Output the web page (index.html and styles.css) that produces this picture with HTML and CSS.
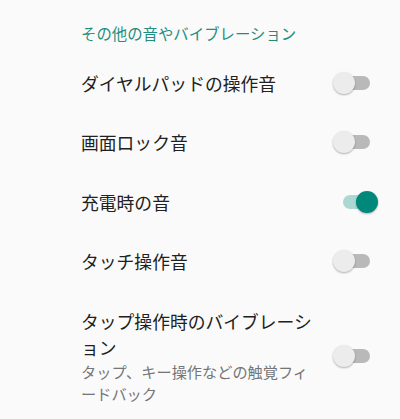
FILE: index.html
```html
<!DOCTYPE html>
<html lang="ja">
<head>
<meta charset="utf-8">
<link rel="stylesheet" href="styles.css">
</head>
<body>
<div class="screen">
  <div class="category">その他の音やバイブレーション</div>
  <div class="row">
    <div class="text"><div class="title">ダイヤルパッドの操作音</div></div>
    <div class="switch"><span class="track"></span><span class="thumb"></span></div>
  </div>
  <div class="row">
    <div class="text"><div class="title">画面ロック音</div></div>
    <div class="switch"><span class="track"></span><span class="thumb"></span></div>
  </div>
  <div class="row">
    <div class="text"><div class="title">充電時の音</div></div>
    <div class="switch on"><span class="track"></span><span class="thumb"></span></div>
  </div>
  <div class="row">
    <div class="text"><div class="title">タッチ操作音</div></div>
    <div class="switch"><span class="track"></span><span class="thumb"></span></div>
  </div>
  <div class="row multi">
    <div class="text">
      <div class="title">タップ操作時のバイブレーション</div>
      <div class="summary">タップ、キー操作などの触覚フィードバック</div>
    </div>
    <div class="switch"><span class="track"></span><span class="thumb"></span></div>
  </div>
</div>
</body>
</html>
```
FILE: styles.css
```css
html, body {
  margin: 0;
  padding: 0;
  background: #fafafa;
}
body {
  font-family: "Noto Sans CJK JP", "Noto Sans", sans-serif;
  width: 400px;
  height: 419px;
  overflow: hidden;
}
.screen {
  padding-left: 81px;
  padding-right: 21px;
}
.category {
  padding-top: 23px;
  font-size: 15.4px;
  line-height: 20px;
  color: #1e8e7e;
  margin-bottom: 10px;
}
.row {
  display: flex;
  align-items: center;
  height: 59.5px;
}
.row.multi {
  height: auto;
  padding-top: 16.5px;
}
.text {
  width: 236px;
  margin-right: 16px;
}
.title {
  font-size: 17.8px;
  line-height: 26px;
  color: #212121;
}
.summary {
  font-size: 15.2px;
  line-height: 22px;
  color: #757575;
}
.switch {
  position: relative;
  width: 46px;
  height: 22px;
  flex: none;
}
.track {
  position: absolute;
  left: 10px;
  top: 4px;
  width: 27px;
  height: 14px;
  border-radius: 7px;
  background: #b9b9b9;
}
.thumb {
  position: absolute;
  left: 0;
  top: 0;
  width: 22px;
  height: 22px;
  border-radius: 50%;
  background: #ececec;
  box-shadow: 0 1px 2px rgba(0,0,0,0.3);
}
.switch.on .track {
  background: #abd8d3;
}
.switch.on .thumb {
  left: 23px;
  background: #00897b;
}
```
